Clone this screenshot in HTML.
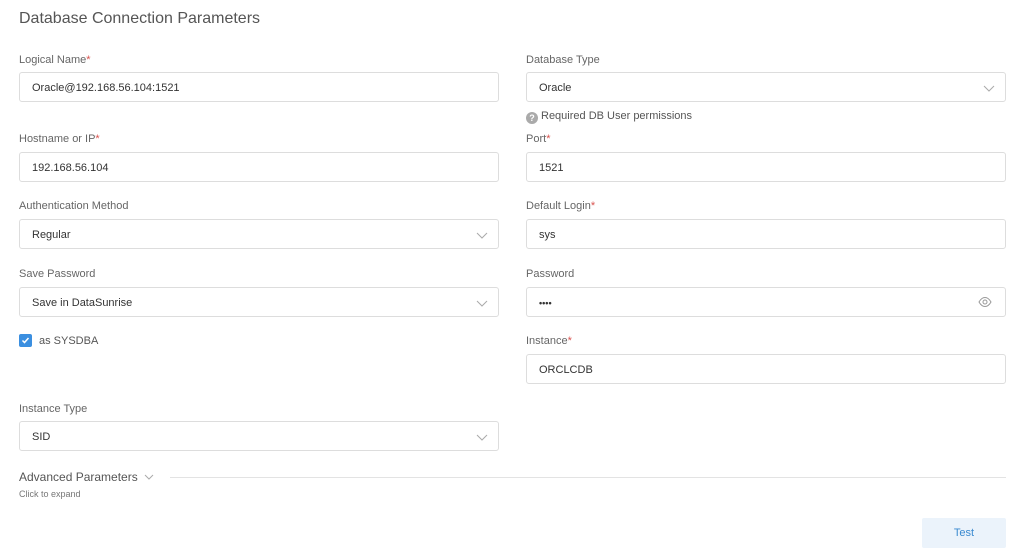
<!DOCTYPE html>
<html><head><meta charset="utf-8"><style>
*{box-sizing:border-box;margin:0;padding:0}
body{width:1024px;height:555px;background:#fff;position:relative;font-family:"Liberation Sans",sans-serif;overflow:hidden}
.a{position:absolute}
.t{left:19px;top:10px;font-size:16px;color:#555}
.l{font-size:11px;color:#666}
.l b{color:#d9534f;font-weight:normal}
.i{height:30px;border:1px solid #ddd;border-radius:3px;font-size:11px;color:#333;padding-left:12px;line-height:30px}
.L{left:19px;width:480px}.R{left:526px;width:480px}
.chev{position:absolute;right:10px;top:10px}
</style></head><body>
<div class="a t">Database Connection Parameters</div>

<div class="a l" style="left:19px;top:54px">Logical Name<b>*</b></div>
<div class="a i L" style="top:72px">Oracle@192.168.56.104:1521</div>
<div class="a l" style="left:526px;top:54px">Database Type</div>
<div class="a i R" style="top:72px">Oracle<svg class="chev" width="12" height="10" viewBox="0 0 12 10"><path d="M1 3l5 5 5-5" fill="none" stroke="#aaa" stroke-width="1"/></svg></div>
<div class="a l" style="left:526px;top:110px;color:#555"><span style="display:inline-block;width:12px;height:12px;border-radius:50%;background:#aaa;color:#fff;font-size:9px;text-align:center;line-height:12px;font-weight:bold;vertical-align:-2px;margin-right:3px">?</span>Required DB User permissions</div>

<div class="a l" style="left:19px;top:133px">Hostname or IP<b>*</b></div>
<div class="a i L" style="top:152px">192.168.56.104</div>
<div class="a l" style="left:526px;top:133px">Port<b>*</b></div>
<div class="a i R" style="top:152px">1521</div>

<div class="a l" style="left:19px;top:200px">Authentication Method</div>
<div class="a i L" style="top:219px">Regular<svg class="chev" width="12" height="10" viewBox="0 0 12 10"><path d="M1 3l5 5 5-5" fill="none" stroke="#aaa"/></svg></div>
<div class="a l" style="left:526px;top:200px">Default Login<b>*</b></div>
<div class="a i R" style="top:219px">sys</div>

<div class="a l" style="left:19px;top:268px">Save Password</div>
<div class="a i L" style="top:287px">Save in DataSunrise<svg class="chev" width="12" height="10" viewBox="0 0 12 10"><path d="M1 3l5 5 5-5" fill="none" stroke="#aaa"/></svg></div>
<div class="a l" style="left:526px;top:268px">Password</div>
<div class="a i R" style="top:287px;font-size:9px;font-weight:bold">••••<svg style="position:absolute;right:13px;top:8px" width="14" height="12" viewBox="0 0 14 12"><path d="M1 6C3 2.5 5 1.5 7 1.5S11 2.5 13 6C11 9.5 9 10.5 7 10.5S3 9.5 1 6Z" fill="none" stroke="#999"/><circle cx="7" cy="6" r="2" fill="none" stroke="#999"/></svg></div>

<div class="a" style="left:19px;top:334px;width:13px;height:13px;background:#3b8fe0;border-radius:2px"><svg width="13" height="13" viewBox="0 0 13 13"><path d="M3.5 6.5l2 2 4-4.5" fill="none" stroke="#fff" stroke-width="1.5"/></svg></div>
<div class="a l" style="left:39px;top:335px;color:#555">as SYSDBA</div>
<div class="a l" style="left:526px;top:335px">Instance<b>*</b></div>
<div class="a i R" style="top:354px">ORCLCDB</div>

<div class="a l" style="left:19px;top:403px">Instance Type</div>
<div class="a i L" style="top:421px">SID<svg class="chev" width="12" height="10" viewBox="0 0 12 10"><path d="M1 3l5 5 5-5" fill="none" stroke="#aaa"/></svg></div>

<div class="a" style="left:19px;top:470px;font-size:12px;color:#555">Advanced Parameters <svg width="10" height="8" viewBox="0 0 10 8" style="margin-left:3px"><path d="M1 2l4 4 4-4" fill="none" stroke="#aaa"/></svg></div>
<div class="a" style="left:170px;top:477px;width:836px;height:1px;background:#e3e3e3"></div>
<div class="a" style="left:19px;top:489px;font-size:9px;color:#777">Click to expand</div>

<div class="a" style="left:922px;top:518px;width:84px;height:30px;background:#ebf3fb;color:#3a8ad0;font-size:11px;text-align:center;line-height:30px;border-radius:2px">Test</div>
</body></html>
